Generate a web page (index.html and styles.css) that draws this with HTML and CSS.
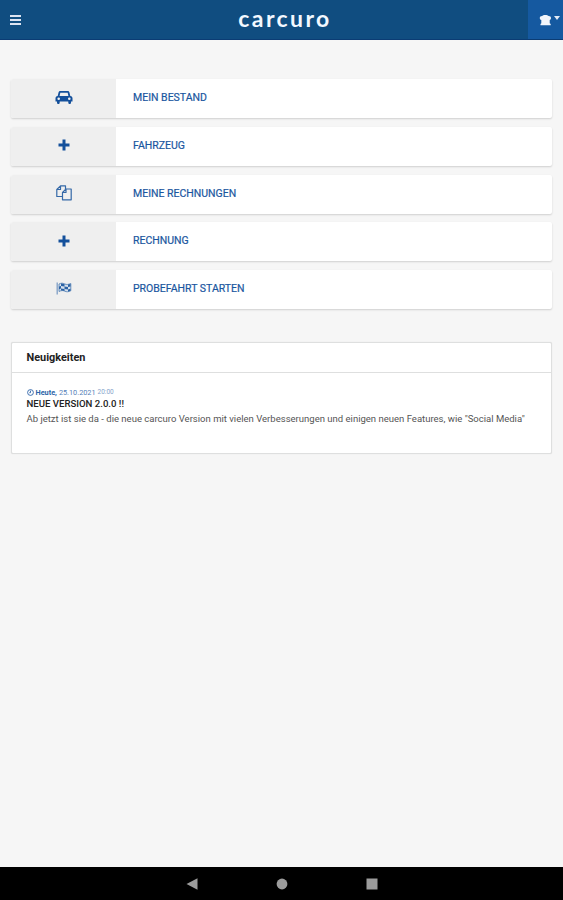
FILE: index.html
```html
<!DOCTYPE html>
<html lang="de">
<head>
    <meta charset="UTF-8">
    <meta name="viewport" content="width=device-width, initial-scale=1.0">
    <title>carcuro</title>
    <link rel="stylesheet" href="styles.css">
</head>
<body>
    <header class="navbar">
        <button class="menu-btn" aria-label="Menü">
            <span class="bar"></span>
            <span class="bar"></span>
            <span class="bar"></span>
        </button>
        <div class="logo">carcuro</div>
        <button class="user-btn" aria-label="Benutzer">
            <svg width="13" height="12" viewBox="0 0 13 12"><path d="M2.300 6C1.200 5.700.8 5 .8 4c0-1.200.9-1.900 2.200-1.900C4 .5 8.500.5 9.700 2.100c1.500 0 2.300.8 2.300 1.900 0 1-.5 1.700-1.300 2v3.200l1 .7v1.400H1.500V9.900l.8-.7z" fill="#f1f5fb"/></svg>
            <span class="caret"></span>
        </button>
    </header>

    <main class="content">
        <nav class="tiles">
            <a class="tile">
                <span class="tile-icon">
                    <svg width="18" height="15" viewBox="0 0 18 15"><path fill-rule="evenodd" fill="#14509b" d="M5.500 1h7c1 0 1.600.4 1.900 1.300L15.300 6c1.500.2 2.200 1.100 2.200 2.300v3.200H16v1c0 2-2.700 2-2.700 0v-1H4.700v1c0 2-2.700 2-2.700 0v-1H.5V8.300C.5 7.100 1.200 6.200 2.700 6l.9-3.700C3.900 1.400 4.500 1 5.500 1zM5.300 2.800 4.600 6h8.800l-.7-3.200zM3.700 7.500a1.300 1.300 0 1 0 0 2.600 1.300 1.300 0 0 0 0-2.600zm10.600 0a1.300 1.300 0 1 0 0 2.600 1.300 1.300 0 0 0 0-2.600z"/></svg>
                </span>
                <span class="tile-label">MEIN BESTAND</span>
            </a>
            <a class="tile">
                <span class="tile-icon">
                    <svg width="12" height="12" viewBox="0 0 12 12"><path d="M4.500.5h3v4h4v3h-4v4h-3v-4h-4v-3h4z" fill="#14509b"/></svg>
                </span>
                <span class="tile-label">FAHRZEUG</span>
            </a>
            <a class="tile">
                <span class="tile-icon">
                    <svg width="16" height="16" viewBox="0 0 16 16" fill="none" stroke="#3569a8" stroke-width="1.200" stroke-linejoin="round"><path d="M6.200 11.500H.8V4.500L4.500.8h5v3.200M4.500.8v3.700H.8"/><path d="M10 4h5.200v10.800H6.500V7.500zv3.500H6.500"/></svg>
                </span>
                <span class="tile-label">MEINE RECHNUNGEN</span>
            </a>
            <a class="tile">
                <span class="tile-icon">
                    <svg width="12" height="12" viewBox="0 0 12 12"><path d="M4.500.5h3v4h4v3h-4v4h-3v-4h-4v-3h4z" fill="#14509b"/></svg>
                </span>
                <span class="tile-label">RECHNUNG</span>
            </a>
            <a class="tile">
                <span class="tile-icon">
                    <svg width="16" height="13" viewBox="0 0 16 13"><path d="M1.200.5v12" stroke="#7f9fc6" stroke-width="1.300"/><path d="M3 2c2.500-1.300 4-.8 5.800 0 2 .8 3.500.5 6-.5v7.300c-2.500 1.200-4 1.200-6 .4C7 8.400 5.500 8.200 3 9.500z" fill="#d6e0ec" stroke="#4a78b0" stroke-width=".8"/><path d="M5 1.500 8.500 2v2.500L5 4zM8.500 4.500 12 5v2.500l-3.500-.6zM12 2.500l2.500-.6V4.500L12 5zM3 4.500 5 4v2.500l-2 .8zM5 6.500l3.500.4V9L5 8.300zM12 7.500l2.500-.8v2L12 9.500z" fill="#2b62a5"/></svg>
                </span>
                <span class="tile-label">PROBEFAHRT STARTEN</span>
            </a>
        </nav>

        <section class="card">
            <h2 class="card-title">Neuigkeiten</h2>
            <div class="card-body">
                <div class="news-date">
                    <svg width="7" height="7" viewBox="0 0 7 7" fill="none" stroke="#2c63a8" stroke-width=".9"><circle cx="3.500" cy="3.500" r="2.900"/><path d="M3.500 1.700v2H2.300"/></svg>
                    <b>Heute,</b> <span class="day">25.10.2021</span> <span class="time">20:00</span>
                </div>
                <div class="news-title">NEUE VERSION 2.0.0 !!</div>
                <p class="news-text">Ab jetzt ist sie da - die neue carcuro Version mit vielen Verbesserungen und einigen neuen Features, wie "Social Media"</p>
            </div>
        </section>
    </main>

    <footer class="android-nav">
        <svg width="12" height="12" viewBox="0 0 12 12"><path d="M.5 6 11.500.3v11.400z" fill="#9c9c9c"/></svg>
        <svg width="12" height="12" viewBox="0 0 12 12"><circle cx="6" cy="6" r="5.400" fill="#9c9c9c"/></svg>
        <svg width="12" height="12" viewBox="0 0 12 12"><path d="M.5.5h11v11H.5z" fill="#9c9c9c"/></svg>
    </footer>
</body>
</html>
```
FILE: styles.css
```css
* {
    box-sizing: border-box;
}

body {
    margin: 0;
    height: 900px;
    display: flex;
    flex-direction: column;
    overflow: hidden;
    background: #f6f6f6;
    font-family: Roboto, "Liberation Sans", sans-serif;
    color: #222;
}

button {
    border: none;
    background: none;
    padding: 0;
}

/* top bar */
.navbar {
    display: grid;
    grid-template-columns: 35px 1fr 35px;
    height: 40px;
    flex: none;
    background: #104d80;
    border-bottom: 1px solid #0b3c74;
}

.menu-btn {
    display: flex;
    flex-direction: column;
    align-items: flex-start;
    gap: 2px;
    padding: 15px 0 0 10px;
}

.bar {
    width: 11px;
    height: 2px;
    background: #dce4f2;
}

.logo {
    padding-left: 7px;
    text-align: center;
    color: #f3f8ff;
    font-family: Lato, sans-serif;
    font-size: 23px;
    font-weight: bold;
    line-height: 37px;
    letter-spacing: 2.4px;
}

.user-btn {
    display: flex;
    align-items: center;
    gap: 2px;
    padding-left: 11px;
    background: #1559a0;
}

.user-btn svg {
    flex: none;
}

.caret {
    border: 3px solid transparent;
    border-top: 4px solid #e3ebf6;
    border-bottom: none;
    margin-top: -3px;
}

/* tiles */
.content {
    flex: 1;
    padding: 39px 11px 0;
}

.tiles {
    display: flex;
    flex-direction: column;
    gap: 8.75px;
}

.tile {
    display: flex;
    height: 39px;
    background: #fff;
    border-radius: 2px;
    box-shadow: 0 1px 2px rgba(0, 0, 0, 0.16);
    color: #1a56a0;
    font-size: 10.5px;
    line-height: 37px;
}

.tile-icon {
    display: flex;
    align-items: center;
    justify-content: center;
    width: 105px;
    padding-bottom: 2px;
    background: #efefef;
    border-radius: 2px 0 0 2px;
}

.tile-label {
    padding-left: 17px;
    -webkit-text-stroke: 0.2px #1a56a0;
}

/* news */
.card {
    height: 112px;
    margin-top: 33px;
    background: #fff;
    border: 1px solid #dedfdf;
    border-radius: 2px;
    box-shadow: 0 0 1px rgba(0, 0, 0, 0.15);
}

.card-title {
    height: 30px;
    margin: 0;
    padding-left: 14.5px;
    border-bottom: 1px solid #dedfdf;
    font-size: 10.9px;
    font-weight: bold;
    line-height: 29px;
}

.card-body {
    padding: 14px 14.5px 0;
}

.news-date {
    display: flex;
    align-items: center;
    gap: 2px;
    height: 10px;
    color: #2c63a8;
    font-size: 7.3px;
}

.day {
    color: #5580b8;
}

.time {
    color: #86a4cb;
    font-size: 6.5px;
}

.news-title {
    font-size: 9.6px;
    font-weight: 500;
    line-height: 14px;
}

.news-text {
    margin: 0;
    color: #555;
    font-size: 9.52px;
    line-height: 15px;
    white-space: nowrap;
}

/* android buttons */
.android-nav {
    display: flex;
    flex: none;
    align-items: center;
    justify-content: center;
    gap: 78px;
    height: 33px;
    background: #000;
}
```
